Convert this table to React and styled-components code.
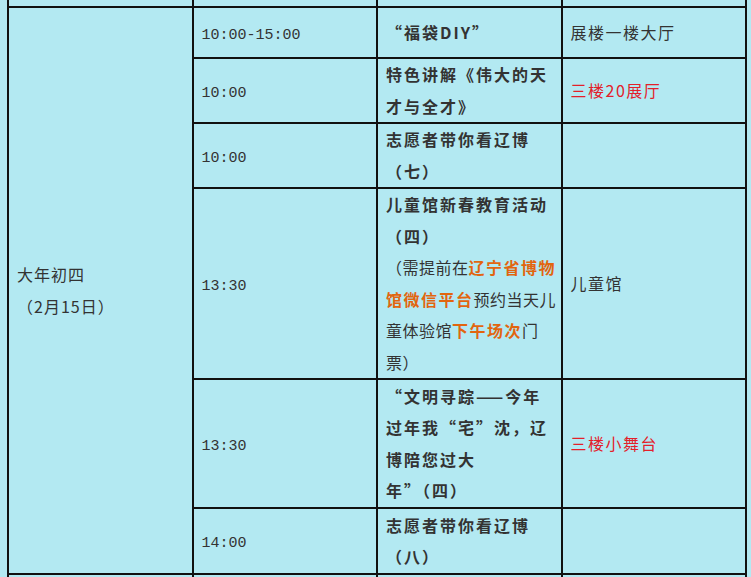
import React from "react";
import styled, { createGlobalStyle } from "styled-components";

const GlobalStyle = createGlobalStyle`
  html, body {
    margin: 0;
    padding: 0;
    background: #b3e9f2;
    overflow: hidden;
  }
  body {
    font-family: "Noto Sans CJK SC", "Liberation Sans", sans-serif;
    color: #333;
  }
`;

const Schedule = styled.table`
  border-collapse: collapse;
  table-layout: fixed;
  width: 740px;
  margin-left: 7px;
  font-size: 16px;
  line-height: 31.5px;
  background: #b3e9f2;
`;

const Row = styled.tr`
  height: ${(p) => p.$h}px;
`;

const Cell = styled.td`
  border: 2px solid #111;
  padding: 0 0 0 8px;
  vertical-align: middle;
  width: 25%;
  ${(p) => p.$open && "border-top: none;"}
`;

const DayCell = styled(Cell)`
  letter-spacing: 1px;
`;

const TimeCell = styled(Cell)`
  padding-top: 6px;
  font-family: "Liberation Mono", monospace;
  font-size: 15px;
`;

const ActCell = styled(Cell)`
  white-space: nowrap;
`;

const Title = styled.span`
  font-weight: 700;
  letter-spacing: 2px;
`;

const Note = styled.span`
  letter-spacing: 0.5px;
`;

const Hl = styled.span`
  font-weight: 700;
  color: #e2650f;
  letter-spacing: 1.5px;
`;

const PlaceCell = styled(Cell)`
  letter-spacing: 1.5px;
  color: ${(p) => (p.$red ? "#e3202a" : "#333")};
`;

const rows = [
  {
    time: "10:00-15:00",
    h: 51,
    act: <Title>“福袋DIY”</Title>,
    place: "展楼一楼大厅",
  },
  {
    time: "10:00",
    h: 65,
    act: (
      <Title>
        特色讲解《伟大的天<br />才与全才》
      </Title>
    ),
    place: "三楼20展厅",
    red: true,
  },
  {
    time: "10:00",
    h: 65,
    act: (
      <Title>
        志愿者带你看辽博<br />（七）
      </Title>
    ),
    place: "",
  },
  {
    time: "13:30",
    h: 190,
    act: (
      <>
        <Title>
          儿童馆新春教育活动<br />（四）
        </Title>
        <br />
        <Note>（需提前在</Note>
        <Hl>
          辽宁省博物<br />馆微信平台
        </Hl>
        <Note>
          预约当天儿<br />童体验馆
        </Note>
        <Hl>下午场次</Hl>
        <Note>
          门<br />票）
        </Note>
      </>
    ),
    place: "儿童馆",
  },
  {
    time: "13:30",
    h: 129,
    act: (
      <Title>
        “文明寻踪——今年<br />过年我“宅”沈，辽<br />博陪您过大<br />年”（四）
      </Title>
    ),
    place: "三楼小舞台",
    red: true,
  },
  {
    time: "14:00",
    h: 66,
    act: (
      <Title>
        志愿者带你看辽博<br />（八）
      </Title>
    ),
    place: "",
  },
];

export default function App() {
  return (
    <>
      <GlobalStyle />
      <Schedule>
        <tbody>
          <Row $h={7}>
            <Cell $open />
            <Cell $open />
            <Cell $open />
            <Cell $open />
          </Row>
          {rows.map((r, i) => (
            <Row key={i} $h={r.h}>
              {i === 0 && (
                <DayCell rowSpan={rows.length}>
                  大年初四
                  <br />
                  （2月15日）
                </DayCell>
              )}
              <TimeCell>{r.time}</TimeCell>
              <ActCell>{r.act}</ActCell>
              <PlaceCell $red={r.red}>{r.place}</PlaceCell>
            </Row>
          ))}
          <Row $h={40}>
            <Cell />
            <Cell />
            <Cell />
            <Cell />
          </Row>
        </tbody>
      </Schedule>
    </>
  );
}
